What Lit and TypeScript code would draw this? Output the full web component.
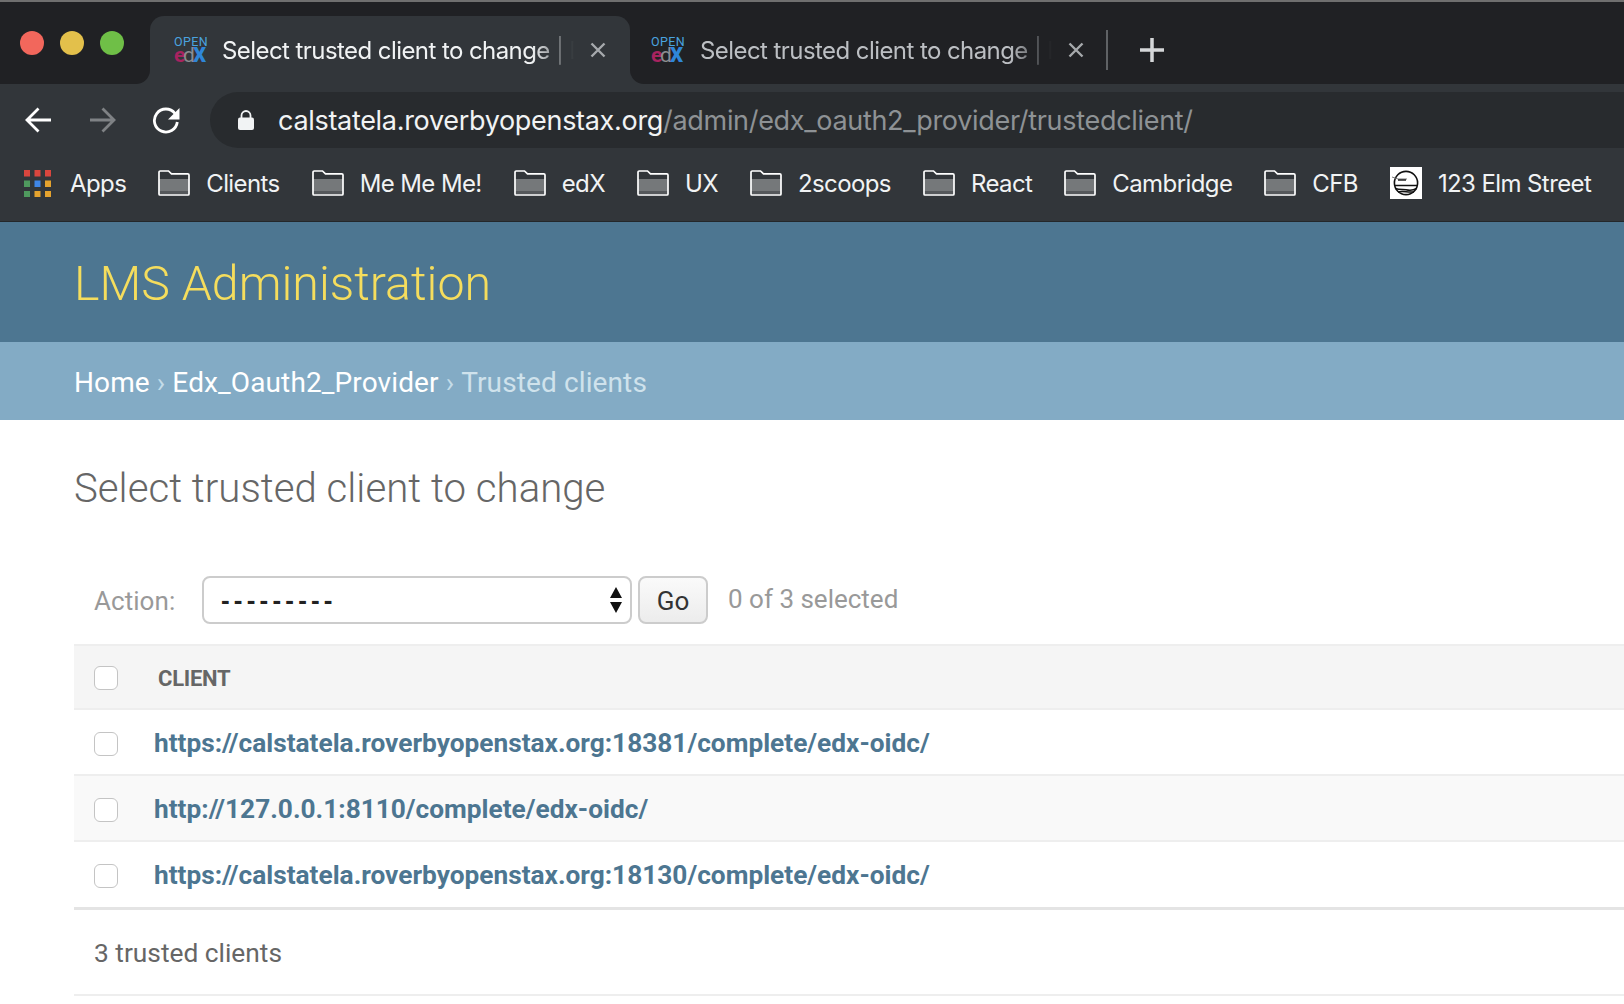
import { LitElement, html, css, svg } from 'lit';
import { customElement } from 'lit/decorators.js';

const folderIcon = html`<svg class="bm-icon" width="32" height="26" viewBox="0 0 32 26">
  <path d="M1 9h30v15H1z" fill="#75787a"/>
  <path d="M1 21h30v3.400H1z" fill="#55585b"/>
  <path d="M1 24V2.200C1 1.500 1.500 1 2.200 1H10.500l3 2.800h16.300c.7 0 1.200.5 1.200 1.200V24c0 .6-.5 1-1 1H2c-.6 0-1-.4-1-1z" fill="none" stroke="#fff" stroke-width="1.700"/>
</svg>`;

const appsColors = ['#d9463e', '#d9463e', '#d9463e', '#4f9a5e', '#3f86e8', '#e5a32e', '#4f9a5e', '#e5a32e', '#e5a32e'];

const appsIcon = html`<svg class="bm-icon" width="27" height="27" viewBox="0 0 27 27">
  ${appsColors.map((c, i) => svg`<rect x=${(i % 3) * 10.5} y=${Math.floor(i / 3) * 10.5} width="6" height="6.5" fill=${c}/>`)}
</svg>`;

const elmIcon = html`<svg class="bm-icon" width="32" height="32" viewBox="0 0 32 32">
  <rect width="32" height="32" fill="#fff"/>
  <circle cx="16" cy="16" r="11.600" fill="#fff" stroke="#111" stroke-width="1.600"/>
  <path d="M4.600 18.500h22.800M5.500 21.500c4 1.600 8 .6 10.500 1.200s7 .8 10.500-1.200M8 25c3-.8 5-.6 8-.2s5 .4 8 .2" fill="none" stroke="#111" stroke-width="1.500"/>
  <path d="M2 10l6 2h9" fill="none" stroke="#777" stroke-width="1"/>
  <path d="M8 13h8" stroke="#111" stroke-width="1.400"/>
</svg>`;

const closeIcon = html`<svg class="close" width="16" height="16" viewBox="0 0 16 16">
  <path d="M1.500 1.500l13 13M14.500 1.500l-13 13" stroke="currentColor" stroke-width="2.400" fill="none"/>
</svg>`;

const edxLogo = html`<svg class="favicon" width="33" height="26" viewBox="0 0 33 26">
  <text x="0" y="9" font-family="Roboto" font-size="12.500" fill="#4aa3df" textLength="33">OPEN</text>
  <text x="0" y="25" font-family="Roboto" font-weight="700" font-size="21" fill="#a8235f">e</text>
  <text x="9" y="25" font-family="Roboto" font-size="21" fill="#8a8d90">d</text>
  <text x="19" y="25" font-family="Roboto" font-weight="900" font-size="20.500" fill="#2f86d8">X</text>
</svg>`;

const bookmarks = ['Clients', 'Me Me Me!', 'edX', 'UX', '2scoops', 'React', 'Cambridge', 'CFB'];

const clients = [
  'https://calstatela.roverbyopenstax.org:18381/complete/edx-oidc/',
  'http://127.0.0.1:8110/complete/edx-oidc/',
  'https://calstatela.roverbyopenstax.org:18130/complete/edx-oidc/'
];

@customElement('app-root')
export class AppRoot extends LitElement {
  static styles = css`
    :host {
      display: block;
      width: 1624px;
      height: 1004px;
      overflow: hidden;
      background: #fff;
      font-family: Roboto, 'Liberation Sans', sans-serif;
    }

    /* browser chrome */
    .chrome {
      font-family: Inter, 'Liberation Sans', sans-serif;
      background: #32363a;
      border-top: 2px solid #6f6f6f;
    }

    .strip {
      display: flex;
      height: 82px;
      background: linear-gradient(#202124 40px, #32363a 40px);
    }

    .lights {
      display: flex;
      align-items: center;
      gap: 16px;
      width: 150px;
      box-sizing: border-box;
      padding: 0 0 0 20px;
      height: 100%;
      background: #202124;
      border-bottom-right-radius: 14px;
    }

    .light {
      width: 24px;
      height: 24px;
      margin-top: -1px;
      border-radius: 50%;
    }

    .tab {
      display: flex;
      align-items: center;
      box-sizing: border-box;
      width: 480px;
      margin-top: 14px;
      padding: 0 24px;
      border-radius: 14px 14px 0 0;
      background: #32363a;
      color: #f1f3f4;
      font-size: 24px;
      letter-spacing: -0.57px;
    }

    .rest {
      flex: 1;
      display: flex;
      align-items: center;
      background: #202124;
      border-bottom-left-radius: 14px;
    }

    .tab.inactive {
      background: none;
      color: #bcbfc3;
      width: 476px;
      padding: 14px 22px 0 21px;
      margin-top: 0;
      height: 100%;
    }

    .title {
      flex: 1;
      margin-left: 15px;
      overflow: hidden;
      white-space: nowrap;
      -webkit-mask-image: linear-gradient(90deg, #000 88%, transparent 100%);
      mask-image: linear-gradient(90deg, #000 88%, transparent 100%);
    }

    .inactive .title {
      margin-left: 16px;
    }

    .favicon {
      flex: none;
    }

    .close {
      flex: none;
      margin-left: 16px;
      color: #a6a9ac;
    }

    .tab-sep {
      width: 2px;
      height: 40px;
      margin-top: 14px;
      background: #5f6265;
    }

    .plus {
      margin: 14px 0 0 31px;
      color: #d5d7d9;
    }

    .nav {
      display: flex;
      align-items: center;
      height: 64px;
      padding-top: 8px;
      box-sizing: border-box;
    }

    .nav-btn {
      display: flex;
      margin-left: 25px;
    }

    .nav-btn + .nav-btn {
      margin-left: 37px;
    }

    .reload {
      margin-left: 36px !important;
    }

    .url {
      flex: 1;
      display: flex;
      align-items: center;
      height: 56px;
      margin-left: 30px;
      padding-left: 28px;
      border-radius: 28px 0 0 28px;
      background: #282b2e;
      color: #8e9295;
      font-size: 27px;
      letter-spacing: -0.31px;
      white-space: nowrap;
    }

    .url b {
      font-weight: 400;
      color: #f1f3f4;
    }

    .url svg {
      margin-right: 24px;
    }

    .bookmarks {
      display: flex;
      align-items: center;
      gap: 32px;
      height: 74px;
      padding: 0 0 3px 24px;
      color: #f1f3f4;
      font-size: 24px;
      letter-spacing: -0.6px;
      border-bottom: 1px solid #24272a;
      box-sizing: border-box;
    }

    .bm {
      display: flex;
      align-items: center;
      gap: 16px;
      white-space: nowrap;
    }

    .bm.apps {
      gap: 19px;
    }

    .bm-icon {
      flex: none;
    }

    /* django admin */
    .branding {
      display: flex;
      align-items: center;
      box-sizing: border-box;
      height: 120px;
      padding: 2px 0 0 74px;
      background: #4d7691;
      color: #f5dd5d;
      font-size: 48.3px;
      font-weight: 300;
    }

    .crumbs {
      display: flex;
      align-items: center;
      gap: 7px;
      box-sizing: border-box;
      height: 78px;
      padding: 2px 0 0 74px;
      background: #83abc5;
      color: #fff;
      font-size: 28px;
      font-weight: 400;
      letter-spacing: 0.12px;
    }

    .crumbs .sep {
      color: #c4dce9;
    }

    .crumbs .current {
      color: #cfe2ec;
    }

    .content {
      padding: 0 0 0 74px;
    }

    h1 {
      margin: 0;
      padding-top: 41px;
      height: 146px;
      box-sizing: border-box;
      color: #666;
      font-size: 40.2px;
      font-weight: 300;
      line-height: 56px;
    }

    .actions {
      display: flex;
      align-items: flex-start;
      box-sizing: border-box;
      height: 78px;
      padding: 10px 0 0 20px;
      color: #999;
      font-size: 26px;
    }

    .label {
      width: 108px;
      line-height: 50px;
      color: #999;
      letter-spacing: 0.05px;
    }

    .select {
      display: flex;
      align-items: center;
      justify-content: space-between;
      box-sizing: border-box;
      width: 430px;
      height: 48px;
      padding: 0 7px 0 17px;
      border: 2px solid #ccc;
      border-radius: 8px;
      color: #222;
      font-family: 'Liberation Sans', sans-serif;
      font-weight: 700;
      letter-spacing: 4.2px;
      font-size: 26px;
    }

    .go {
      box-sizing: border-box;
      width: 70px;
      height: 48px;
      margin-left: 6px;
      border: 2px solid #ccc;
      border-radius: 8px;
      background: linear-gradient(#fafafa, #ececec);
      color: #333;
      text-align: center;
      line-height: 47px;
    }

    .count {
      margin-left: 20px;
      line-height: 46px;
      font-size: 26px;
      color: #999;
    }

    .row {
      display: flex;
      align-items: center;
      box-sizing: border-box;
      height: 66px;
      padding: 1px 0 0 20px;
      border-bottom: 2px solid #eee;
      font-size: 26.25px;
      font-weight: 700;
      color: #4d7691;
    }

    .row.head {
      height: 66px;
      padding-top: 2px;
      border-top: 2px solid #eee;
      background: #f5f5f5;
      color: #666;
      font-size: 22px;
      font-weight: 700;
      letter-spacing: -0.25px;
    }

    .row.alt {
      background: #f9f9f9;
    }

    .row.last {
      height: 68px;
      border-bottom: 3px solid #e4e4e4;
    }

    .check {
      flex: none;
      box-sizing: border-box;
      width: 24px;
      height: 24px;
      margin: 2px 36px 0 0;
      border: 1.5px solid #c4c4c4;
      border-radius: 6px;
      background: #fff;
    }

    .head .check {
      margin: 0 40px 0 0;
    }

    .paginator {
      display: flex;
      align-items: center;
      box-sizing: border-box;
      height: 86px;
      padding: 2px 0 0 20px;
      border-bottom: 2px solid #eee;
      color: #666;
      font-size: 26.3px;
    }
  `;

  render() {
    return html`
      <div class="chrome">
        <div class="strip">
          <div class="lights">
            <span class="light" style="background:#f2675c"></span>
            <span class="light" style="background:#e3c04b"></span>
            <span class="light" style="background:#6fbf47"></span>
          </div>
          ${this.renderTab(false)}
          <div class="rest">
            ${this.renderTab(true)}
            <span class="tab-sep"></span>
            <svg class="plus" width="26" height="26" viewBox="0 0 26 26"><path d="M13 1v24M1 13h24" stroke="currentColor" stroke-width="3.500"/></svg>
          </div>
        </div>
        <div class="nav">
          <span class="nav-btn">
            <svg width="27" height="26" viewBox="0 0 27 26"><path d="M26 13H2.500M13.500 1.500L2 13l11.500 11.500" fill="none" stroke="#fff" stroke-width="2.800"/></svg>
          </span>
          <span class="nav-btn">
            <svg width="27" height="26" viewBox="0 0 27 26"><path d="M1 13h23.500M13.500 1.500L25 13 13.500 24.500" fill="none" stroke="#7f8285" stroke-width="2.800"/></svg>
          </span>
          <span class="nav-btn reload">
            <svg width="28" height="27" viewBox="0 0 28 27"><path d="M23 6.500A11.500 11.500 0 1 0 25.300 15" fill="none" stroke="#fff" stroke-width="2.800"/><path d="M27.500 1v11.500H16z" fill="#fff"/></svg>
          </span>
          <div class="url">
            <svg width="16" height="20" viewBox="0 0 16 20"><path d="M3.500 8V5.500a4.500 4.500 0 0 1 9 0V8" fill="none" stroke="#f1f3f4" stroke-width="1.800"/><rect y="7.500" width="16" height="12.500" rx="2" fill="#f1f3f4"/></svg>
            <span><b>calstatela.roverbyopenstax.org</b>/admin/edx_oauth2_provider/trustedclient/</span>
          </div>
        </div>
        <div class="bookmarks">
          <span class="bm apps">${appsIcon}Apps</span>
          ${bookmarks.map((b) => html`<span class="bm">${folderIcon}${b}</span>`)}
          <span class="bm">${elmIcon}123 Elm Street</span>
        </div>
      </div>

      <div class="branding">LMS Administration</div>
      <div class="crumbs">
        <span>Home</span><span class="sep">›</span><span>Edx_Oauth2_Provider</span><span class="sep">›</span><span class="current">Trusted clients</span>
      </div>

      <div class="content">
        <h1>Select trusted client to change</h1>
        <div class="actions">
          <span class="label">Action:</span>
          <div class="select">
            <span>---------</span>
            <svg width="14" height="28" viewBox="0 0 14 28"><path d="M7 1l6 11H1zM7 27L1 16h12z" fill="#111"/></svg>
          </div>
          <div class="go">Go</div>
          <span class="count">0 of 3 selected</span>
        </div>
        <div class="row head"><span class="check"></span>CLIENT</div>
        ${clients.map(
          (c, i) => html`<div class="row ${i === 1 ? 'alt' : ''} ${i === 2 ? 'last' : ''}">
            <span class="check"></span>${c}
          </div>`
        )}
        <div class="paginator">3 trusted clients</div>
      </div>
    `;
  }

  renderTab(inactive: boolean) {
    return html`<div class="tab ${inactive ? 'inactive' : ''}">
      ${edxLogo}
      <span class="title">Select trusted client to change | D</span>
      ${closeIcon}
    </div>`;
  }
}
